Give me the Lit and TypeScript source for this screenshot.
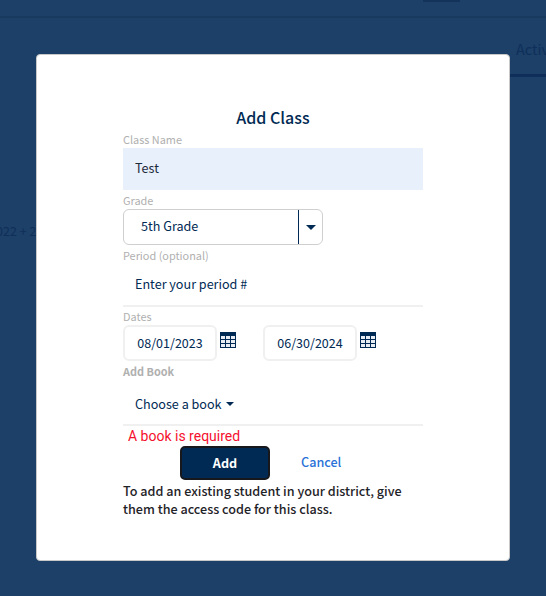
import { LitElement, html, css } from "lit";
import { customElement } from "lit/decorators.js";

const calendar = html`<svg class="cal" width="16" height="16" viewBox="0 0 16 16" aria-hidden="true">
  <path fill="#002a54" d="M0 0h16v16H0z"/>
  <path fill="#e8edf3" d="M1 4h4v3H1zM6 4h4v3H6zM11 4h4v3h-4zM1 8h4v3H1zM6 8h4v3H6zM11 8h4v3h-4zM1 12h4v3H1zM6 12h4v3H6zM11 12h4v3h-4z"/>
</svg>`;

@customElement("app-root")
export class AppRoot extends LitElement {
  static styles = css`
    :host {
      display: block;
      width: 546px;
      height: 596px;
      position: relative;
      overflow: hidden;
      background: #1c4068;
      font-family: "Noto Sans CJK JP", "Source Sans Pro", "Noto Sans", sans-serif;
      color: #002a54;
    }
    .topbar {
      height: 16px;
      border-bottom: 2px solid #193a5f;
      display: flex;
      justify-content: flex-end;
      padding-right: 86px;
    }
    .topbar i { width: 37px; height: 2px; background: #13335a; display: block; }
    .tabs {
      border-bottom: 3px solid #0f2f5a;
      margin-left: 510px;
      padding: 6px 0 0 6px;
      box-sizing: content-box;
      height: 50px;
      display: flex;
      align-items: center;
      overflow: hidden;
      white-space: nowrap;
      font-size: 14.5px;
      line-height: 20px;
      color: #0f2f5a;
    }
    .dates-bg {
      margin-top: 144px;
      font-size: 12.6px;
      line-height: 20px;
      color: #102f58;
      margin-left: -11px;
    }
    .overlay {
      position: absolute;
      inset: 0;
      display: flex;
      justify-content: center;
      align-items: flex-start;
      padding-top: 54px;
    }
    .modal {
      width: 474px;
      height: 507px;
      box-sizing: border-box;
      background: #fff;
      border-radius: 4px;
      border: 1px solid #c8c8c8;
      padding-top: 51px;
      display: flex;
      flex-direction: column;
      align-items: center;
    }
    .form { width: 300px; display: flex; flex-direction: column; }
    h2 {
      margin: 0 0 2px;
      padding-bottom: 2px;
      text-align: center;
      font-size: 16px;
      line-height: 22px;
      font-weight: 500;
      color: #002a54;
    }
    .label {
      font-size: 10.9px;
      line-height: 14px;
      padding-bottom: 2px;
      color: #b0b0b0;
      display: block;
    }
    .label.bold { font-weight: 700; }
    .field {
      height: 43px;
      box-sizing: border-box;
      padding: 0 12px 2px;
      display: flex;
      align-items: center;
      font-size: 12.6px;
      line-height: 20px;
      color: #002a54;
      border-bottom: 2px solid #f0f0f0;
    }
    .filled { height: 42px; background: #e8f0fc; border-bottom: 0; color: #1d2a3a; margin-bottom: 3px; }
    .select {
      width: 200px;
      height: 36px;
      box-sizing: border-box;
      border: 1px solid #cfcfcf;
      border-radius: 6px;
      display: flex;
      align-items: stretch;
      margin-bottom: 3px;
      font-size: 12.6px;
    }
    .select .value { flex: 1; display: flex; align-items: center; padding: 0 0 3px 17px; }
    .select .arrow {
      width: 23px;
      border-left: 1px solid #002a54;
      display: flex;
      align-items: center;
      justify-content: center;
    }
    .tri { width: 0; height: 0; border: 5px solid transparent; border-top-color: #002a54; border-bottom: 0; }
    .period { margin-bottom: 2px; }
    .dates { display: flex; gap: 27px; }
    .date { display: flex; align-items: flex-start; gap: 3px; }
    .date-box {
      width: 94px;
      height: 36px;
      box-sizing: border-box;
      border: 2px solid #f0f0f0;
      border-radius: 6px;
      padding-bottom: 2px;
      display: flex;
      align-items: center;
      justify-content: center;
      font-size: 12.5px;
    }
    .cal { margin-top: 7px; display: block; }
    .book-label { margin-top: 3px; }
    .choose { height: 42px; margin-top: 4px; gap: 4px; padding-bottom: 0; }
    .small-tri { width: 0; height: 0; border: 4px solid transparent; border-top-color: #002a54; border-bottom: 0; }
    .error {
      font-family: Roboto, sans-serif;
      font-size: 14px;
      line-height: 20px;
      color: #f5102d;
      margin-left: 5px;
    }
    .actions { display: flex; align-items: center; padding-left: 57px; gap: 31px; }
    .add {
      width: 90px;
      height: 34px;
      box-sizing: border-box;
      background: #002a54;
      border: 2px solid #16181c;
      border-radius: 5px;
      color: #fff;
      font: 700 12.6px/20px "Noto Sans CJK JP", sans-serif;
    }
    .cancel { color: #2a72d8; font-size: 12.6px; font-weight: 500; line-height: 20px; padding-bottom: 2px; }
    .note {
      margin: 2px 0 0;
      font-size: 12.6px;
      line-height: 18px;
      font-weight: 500;
      color: #1f2328;
    }
  `;

  render() {
    return html`
      <div class="topbar"><i></i></div>
      <div class="tabs">Active</div>
      <div class="dates-bg">2022 + 2023</div>
      <div class="overlay">
        <div class="modal">
          <div class="form">
            <h2>Add Class</h2>
            <span class="label">Class Name</span>
            <div class="field filled">Test</div>
            <span class="label">Grade</span>
            <div class="select">
              <div class="value">5th Grade</div>
              <div class="arrow"><div class="tri"></div></div>
            </div>
            <span class="label">Period (optional)</span>
            <div class="field period">Enter your period #</div>
            <span class="label">Dates</span>
            <div class="dates">
              <div class="date"><div class="date-box">08/01/2023</div>${calendar}</div>
              <div class="date"><div class="date-box">06/30/2024</div>${calendar}</div>
            </div>
            <span class="label bold book-label">Add Book</span>
            <div class="field choose">Choose a book <span class="small-tri"></span></div>
            <div class="error">A book is required</div>
            <div class="actions">
              <button class="add">Add</button>
              <span class="cancel">Cancel</span>
            </div>
            <p class="note">To add an existing student in your district, give them the access code for this class.</p>
          </div>
        </div>
      </div>
    `;
  }
}
